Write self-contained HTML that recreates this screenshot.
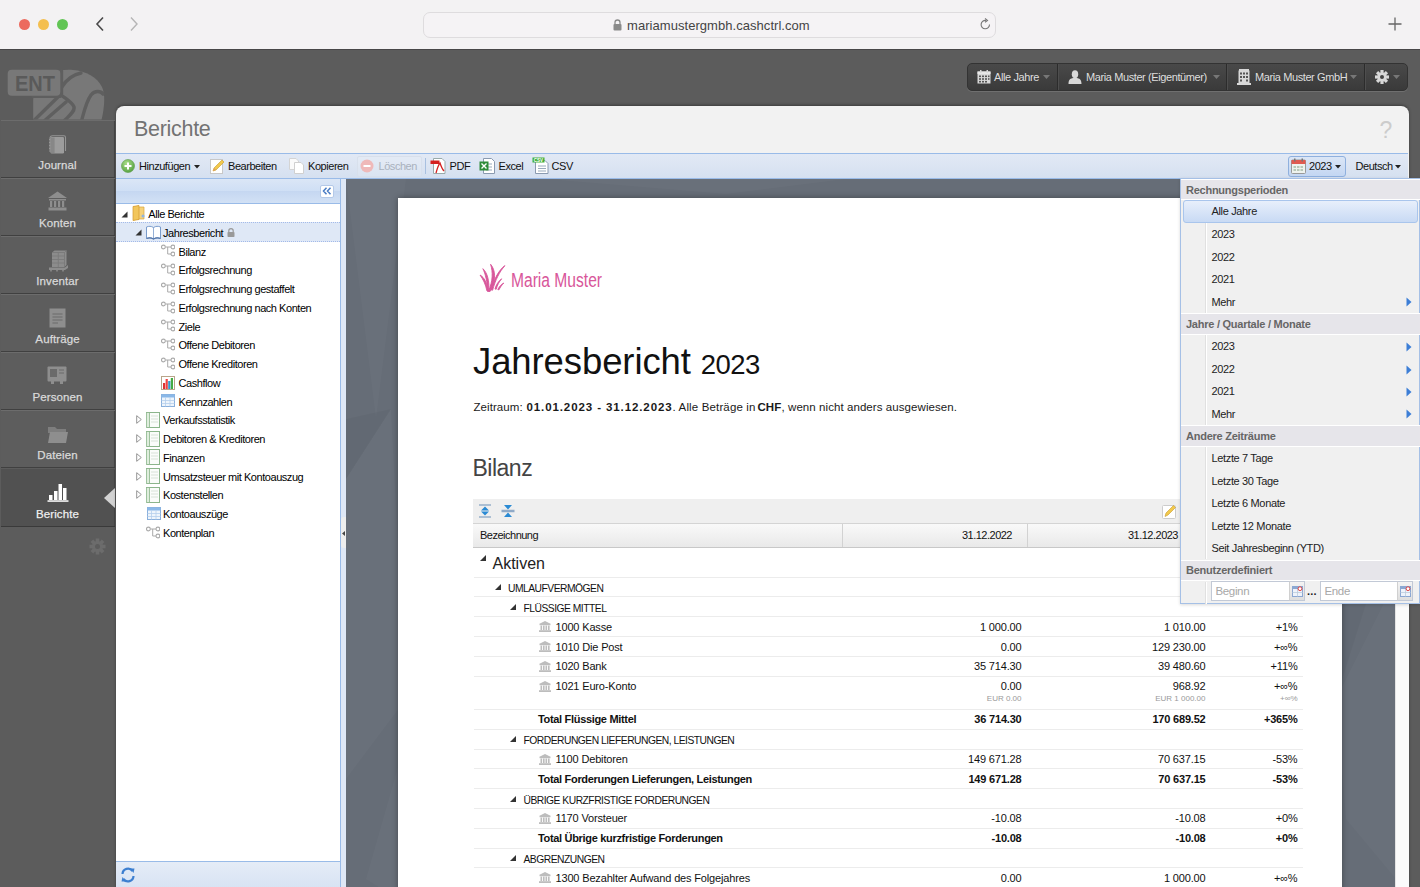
<!DOCTYPE html>
<html><head><meta charset="utf-8">
<style>
*{box-sizing:border-box}
html,body{margin:0;padding:0}
body{width:1420px;height:887px;overflow:hidden;position:relative;background:#5c5c5c;font-family:"Liberation Sans",sans-serif;font-size:11px;color:#000}
.abs{position:absolute}
#chrome{left:0;top:0;width:1420px;height:50px;background:#f3f2f3;border-bottom:1px solid #474747}
.tl{position:absolute;top:18.5px;width:11.5px;height:11.5px;border-radius:50%}
#url{left:423px;top:11.5px;width:573px;height:26px;border:1px solid #dedcde;border-radius:7px;background:#f5f3f5}
#urltext{left:627px;top:17.5px;font-size:13px;color:#444;letter-spacing:0.05px}
/* top buttons */
#topbtns{left:967px;top:63px;width:441px;height:28px;border-radius:5px;background:linear-gradient(#494949,#3a3a3a);border:1px solid #333;box-shadow:0 1px 0 rgba(255,255,255,.12)}
.tb{position:absolute;top:0;height:26px;line-height:27px;color:#dedede;font-size:11px;letter-spacing:-0.4px;white-space:nowrap}
.tbsep{position:absolute;top:0;width:2px;height:26px;background:#2c2c2c;border-right:1px solid #4e4e4e}
/* nav */
.nav{position:absolute;left:1px;width:113.5px;height:58px;background:#5d5d5d;box-shadow:inset -1px 0 0 #474747;border-top:1px solid #6c6c6c;border-bottom:1px solid #404040;color:#d4d4d4;text-align:center;font-size:11.5px}
.nav.sel{background:#515151;border-top:1px solid #515151;border-bottom:1px solid #3a3a3a}
.nav .lbl{position:absolute;left:0;width:113px;top:38px;letter-spacing:.1px;-webkit-text-stroke:0.25px #d8d8d8;color:#dadada}
/* window */
#win{left:115.5px;top:106px;width:1293px;height:800px;background:#f2f2f2;border-radius:8px 8px 0 0;overflow:hidden;box-shadow:0 -1px 3px rgba(0,0,0,.35)}
#wtitle{left:134px;top:117px;font-size:21.5px;color:#737373;letter-spacing:-0.3px}
#toolbar{left:116px;top:153px;width:1292px;height:26px;background:linear-gradient(#e2e9f5,#d5e0f0);border-top:1px solid #99bbe8;border-bottom:1px solid #99bbe8}
.tbi{position:absolute;top:158px;height:16px;line-height:17px;font-size:11px;color:#111;letter-spacing:-0.45px;white-space:nowrap}
/* tree */
#treehdr{left:116px;top:179px;width:225px;height:25px;background:linear-gradient(#dbe6f6 0,#cfdff5 50%,#c5d7f1 51%,#d2e1f5 100%);border-bottom:1px solid #99bbe8;border-right:1px solid #99bbe8}
#tree{left:116px;top:204px;width:225px;height:657px;background:#fff;border-right:1px solid #99bbe8}
#treefoot{left:116px;top:861px;width:225px;height:30px;background:linear-gradient(#e5ecf7,#d6e2f3);border-top:1px solid #99bbe8;border-right:1px solid #99bbe8}
#splitter{left:341px;top:179px;width:5px;height:720px;background:#dfe8f6}
#rep{left:345.5px;top:179px;width:1050px;height:720px;background:#666d77}
#scrolltrack{left:1394.5px;top:179px;width:14.5px;height:720px;background:#fbfbfb;border-left:1px solid #e4e4e4}
#page{left:398px;top:198px;width:944px;height:720px;background:#fff;box-shadow:0 0 6px rgba(0,0,0,.35)}
.tt{height:18.76px;line-height:20.2px;font-size:11px;white-space:nowrap;letter-spacing:-0.45px}
.th{height:24px;line-height:24px;font-size:11px;white-space:nowrap;letter-spacing:-0.5px;color:#111}
.td{height:19.8px;line-height:20.8px;font-size:11px;white-space:nowrap;letter-spacing:-0.16px;color:#111}
.sub{height:10px;line-height:10px;font-size:8px;color:#999;white-space:nowrap}
.dh{height:22.4px;line-height:23px;font-size:11px;font-weight:bold;color:#666;white-space:nowrap;letter-spacing:-0.25px}
.di{height:22.4px;line-height:23px;font-size:11px;color:#222;white-space:nowrap;letter-spacing:-0.35px}
.zr{top:401px;font-size:11.5px;color:#1a1a1a;white-space:nowrap;letter-spacing:0.07px}
.tr{position:absolute;left:116px;width:225px;height:18.8px;line-height:18.8px;font-size:11px;white-space:nowrap}
</style></head><body>

<!-- browser chrome -->
<div id="chrome" class="abs">
  <div class="tl" style="left:18.5px;background:#ec6a5e;"></div>
  <div class="tl" style="left:37.5px;background:#f4bf4f;"></div>
  <div class="tl" style="left:56.5px;background:#61c554;"></div>
  <svg class="abs" style="left:94px;top:16px" width="12" height="16" viewBox="0 0 12 16"><path d="M9 1.5 L3 8 L9 14.5" fill="none" stroke="#4a4a4a" stroke-width="1.6"/></svg>
  <svg class="abs" style="left:128px;top:16px" width="12" height="16" viewBox="0 0 12 16"><path d="M3 1.5 L9 8 L3 14.5" fill="none" stroke="#b5b5b5" stroke-width="1.4"/></svg>
  <div id="url" class="abs"></div>
  <svg class="abs" style="left:613px;top:19px" width="9" height="12" viewBox="0 0 9 12"><path d="M2 5.5 V3.5 A2.5 2.5 0 0 1 7 3.5 V5.5" fill="none" stroke="#8a8a8a" stroke-width="1.3"/><rect x="0.5" y="5" width="8" height="6.5" rx="1" fill="#8a8a8a"/></svg>
  <div id="urltext" class="abs">mariamustergmbh.cashctrl.com</div>
  <svg class="abs" style="left:979px;top:18px" width="13" height="13" viewBox="0 0 13 13"><path d="M10.5 6.5 A4.2 4.2 0 1 1 7 2.4" fill="none" stroke="#777" stroke-width="1.1"/><path d="M6 0.5 L8.5 2.4 L6 4.3" fill="none" stroke="#777" stroke-width="1.1"/></svg>
  <svg class="abs" style="left:1388px;top:17px" width="14" height="14" viewBox="0 0 14 14"><path d="M7 0.5 V13.5 M0.5 7 H13.5" stroke="#666" stroke-width="1.3"/></svg>
</div>


<!-- logo -->
<svg class="abs" style="left:0px;top:60px" width="115" height="60" viewBox="0 0 115 60">
  <defs><clipPath id="lc"><rect x="0" y="0" width="115" height="59.5"/></clipPath></defs>
  <g clip-path="url(#lc)">
  <path d="M33.2 62 V40 C33.2 30 40 20 50 14 C58 10 66 9.5 73 10 C86 11 97 17 102 27 C106 36 104 50 101 62 Z" fill="#787878"/>
  <g stroke="#5f5f5f" stroke-width="3.4" fill="none" stroke-linecap="round">
   <path d="M61.5 11 V34"/>
   <path d="M62 27 C66 20 72 15 81 13"/>
   <path d="M60 35 L34.5 60"/>
   <path d="M33 36.4 H60"/>
   <path d="M61 35 C66 39 72 42 74 47 C75 51 70 55 65 60"/>
   <path d="M45.3 60 L66 42"/>
   <path d="M81.5 61 C84 52 86 42 91 35 C95 30 101 31 103 34"/>
  </g>
  </g>
  <rect x="7.7" y="9.7" width="52.6" height="26" rx="4" fill="#787878"/>
  <text x="35" y="31.3" text-anchor="middle" font-family="Liberation Sans" font-weight="bold" font-size="22" fill="#5a5a5a" textLength="40" lengthAdjust="spacingAndGlyphs">ENT</text>
</svg>

<!-- nav -->
<div class="nav" style="top:120px"><svg class="abs" style="left:48px;top:13.5px" width="18" height="19" viewBox="0 0 18 19"><path d="M1 17 V3 C1 1.5 2 0.7 3.5 0.7 H15 C16 0.7 16.5 1.5 16.5 2.5 V16" fill="none" stroke="#959595" stroke-width="1.1"/><rect x="1.5" y="2" width="13.5" height="16.5" rx="1.2" fill="#9c9c9c"/><rect x="2" y="2.5" width="3.6" height="15.5" fill="#878787"/><g fill="#959595"><rect x="0" y="4" width="1.5" height="1"/><rect x="0" y="7" width="1.5" height="1"/><rect x="0" y="10" width="1.5" height="1"/><rect x="0" y="13" width="1.5" height="1"/></g></svg><div class="lbl">Journal</div></div>
<div class="nav" style="top:178px"><svg class="abs" style="left:46px;top:12px" width="21" height="20" viewBox="0 0 21 20"><path d="M10.5 0.5 L20 7 H1 Z" fill="#8e8e8e"/><rect x="2" y="8" width="17" height="1.5" fill="#8e8e8e"/><rect x="3" y="10" width="2.2" height="6" fill="#8e8e8e"/><rect x="7" y="10" width="2.2" height="6" fill="#8e8e8e"/><rect x="11" y="10" width="2.2" height="6" fill="#8e8e8e"/><rect x="15" y="10" width="2.2" height="6" fill="#8e8e8e"/><rect x="1.5" y="16.5" width="18" height="3" fill="#8e8e8e"/></svg><div class="lbl">Konten</div></div>
<div class="nav" style="top:236px"><svg class="abs" style="left:46.5px;top:12.5px" width="21" height="22" viewBox="0 0 21 22"><path d="M4 2.5 L6.5 0.5 H18.5 V15 L16.5 17 H4 Z" fill="#8c8c8c"/><path d="M4 2.5 H16.5 V17 M16.5 2.5 L18.5 0.5" stroke="#777" stroke-width="0.8" fill="none"/><g stroke="#7a7a7a" stroke-width="0.9"><path d="M4 6 H16.5 M4 9.5 H16.5 M4 13 H16.5"/><path d="M10.3 2.5 V17"/></g><path d="M1 17.5 H17 L20 15 V18 L17 20 H1 Z" fill="#8c8c8c"/><path d="M3 20 V21.5 M9 20 V21.5 M15 20 V21.5" stroke="#8c8c8c" stroke-width="1.6"/></svg><div class="lbl">Inventar</div></div>
<div class="nav" style="top:294px"><svg class="abs" style="left:48px;top:12px" width="17" height="21" viewBox="0 0 17 21"><rect x="0.5" y="1.5" width="16" height="19" fill="#8e8e8e"/><path d="M3.5 7 H13.5 M3.5 10 H13.5 M3.5 13 H13.5 M3.5 16 H9" stroke="#6a6a6a" stroke-width="1.2"/></svg><div class="lbl">Aufträge</div></div>
<div class="nav" style="top:352px"><svg class="abs" style="left:46px;top:13px" width="20" height="19" viewBox="0 0 20 19"><rect x="0.5" y="0.5" width="19" height="15" rx="1" fill="#8e8e8e"/><rect x="3" y="3" width="7" height="8" fill="#6a6a6a"/><path d="M12 4 H17 M12 7 H17" stroke="#6a6a6a" stroke-width="1"/><rect x="4" y="15" width="3" height="3" fill="#8e8e8e"/><rect x="13" y="15" width="3" height="3" fill="#8e8e8e"/></svg><div class="lbl">Personen</div></div>
<div class="nav" style="top:410px"><svg class="abs" style="left:46px;top:14px" width="22" height="19" viewBox="0 0 22 19"><path d="M1 2 H8 L10 4 H19 V8 H1 Z" fill="#7e7e7e"/><path d="M3 7 H21 L19 18 H1 Z" fill="#8e8e8e"/></svg><div class="lbl">Dateien</div></div>
<div class="nav sel" style="top:468.5px"><svg class="abs" style="left:45.5px;top:12.5px" width="22" height="20" viewBox="0 0 22 20"><rect x="2" y="13" width="3.5" height="5" fill="#fff"/><rect x="7" y="9" width="3.5" height="9" fill="#fff"/><rect x="11.5" y="2" width="3.5" height="16" fill="#fff"/><rect x="16" y="6" width="3.5" height="12" fill="#fff"/><rect x="0.5" y="18.3" width="21" height="1.5" fill="#fff"/></svg><div class="lbl" style="color:#fff">Berichte</div></div>
<svg class="abs" style="left:103.5px;top:488px" width="11" height="20" viewBox="0 0 11 20"><path d="M11 0 L0 10 L11 20 Z" fill="#d2d2d2"/></svg>
<svg class="abs" style="left:89px;top:538px" width="17" height="17" viewBox="-8.5 -8.5 17 17"><g fill="#6c6c6c"><circle r="5.5"/><rect x="-1.8" y="-8" width="3.6" height="16"/><rect x="-1.8" y="-8" width="3.6" height="16" transform="rotate(45)"/><rect x="-1.8" y="-8" width="3.6" height="16" transform="rotate(90)"/><rect x="-1.8" y="-8" width="3.6" height="16" transform="rotate(135)"/></g><circle r="2.5" fill="#5c5c5c"/></svg>

<!-- top buttons -->
<div id="topbtns" class="abs">
  <svg class="abs" style="left:9px;top:6px" width="14" height="14" viewBox="0 0 14 14"><rect x="0.5" y="1.5" width="13" height="12" fill="#d8d8d8"/><rect x="0.5" y="1.5" width="13" height="2.5" fill="#e8e8e8"/><g fill="#555"><rect x="2" y="5.5" width="2" height="1.6"/><rect x="5" y="5.5" width="2" height="1.6"/><rect x="8" y="5.5" width="2" height="1.6"/><rect x="11" y="5.5" width="1.5" height="1.6"/><rect x="2" y="8.2" width="2" height="1.6"/><rect x="5" y="8.2" width="2" height="1.6"/><rect x="8" y="8.2" width="2" height="1.6"/><rect x="11" y="8.2" width="1.5" height="1.6"/><rect x="2" y="10.9" width="2" height="1.6"/><rect x="5" y="10.9" width="2" height="1.6"/><rect x="8" y="10.9" width="2" height="1.6"/></g><rect x="3" y="0" width="1.5" height="3" fill="#d8d8d8"/><rect x="9.5" y="0" width="1.5" height="3" fill="#d8d8d8"/></svg>
  <div class="tb" style="left:26px">Alle Jahre</div>
  <svg class="abs caret" style="left:75px;top:11px" width="7" height="4" viewBox="0 0 7 4"><path d="M0 0 H7 L3.5 4 Z" fill="#777"/></svg>
  <div class="tbsep" style="left:89px"></div>
  <svg class="abs" style="left:100px;top:6px" width="14" height="14" viewBox="0 0 14 14"><ellipse cx="7" cy="4.2" rx="3.2" ry="4" fill="#d8d8d8"/><path d="M0.5 14 C0.5 9 3 8.5 5 8 H9 C11 8.5 13.5 9 13.5 14 Z" fill="#d8d8d8"/></svg>
  <div class="tb" style="left:118px">Maria Muster (Eigentümer)</div>
  <svg class="abs caret" style="left:245px;top:11px" width="7" height="4" viewBox="0 0 7 4"><path d="M0 0 H7 L3.5 4 Z" fill="#777"/></svg>
  <div class="tbsep" style="left:258px"></div>
  <svg class="abs" style="left:269px;top:5px" width="14" height="16" viewBox="0 0 14 16"><rect x="1.5" y="1.5" width="11" height="13" fill="#d8d8d8"/><rect x="0" y="14" width="14" height="2" fill="#d8d8d8"/><rect x="2" y="0" width="10" height="2" fill="#d8d8d8"/><g fill="#555"><rect x="3" y="3.5" width="2" height="2"/><rect x="6" y="3.5" width="2" height="2"/><rect x="9" y="3.5" width="2" height="2"/><rect x="3" y="7" width="2" height="2"/><rect x="6" y="7" width="2" height="2"/><rect x="9" y="7" width="2" height="2"/><rect x="3" y="10.5" width="2" height="2"/><rect x="9" y="10.5" width="2" height="2"/></g></svg>
  <div class="tb" style="left:287px">Maria Muster GmbH</div>
  <svg class="abs caret" style="left:382px;top:11px" width="7" height="4" viewBox="0 0 7 4"><path d="M0 0 H7 L3.5 4 Z" fill="#777"/></svg>
  <div class="tbsep" style="left:396px"></div>
  <svg class="abs" style="left:407px;top:6px" width="14" height="14" viewBox="-7 -7 14 14"><g fill="#d8d8d8"><circle r="4.6"/><rect x="-1.6" y="-7" width="3.2" height="14"/><rect x="-1.6" y="-7" width="3.2" height="14" transform="rotate(45)"/><rect x="-1.6" y="-7" width="3.2" height="14" transform="rotate(90)"/><rect x="-1.6" y="-7" width="3.2" height="14" transform="rotate(135)"/></g><circle r="2" fill="#444"/></svg>
  <svg class="abs caret" style="left:425px;top:11px" width="7" height="4" viewBox="0 0 7 4"><path d="M0 0 H7 L3.5 4 Z" fill="#777"/></svg>
</div>

<!-- main window -->
<div id="win" class="abs"></div>
<div id="wtitle" class="abs">Berichte</div>
<div class="abs" style="left:1379.5px;top:117px;font-size:23px;color:#cccccc;line-height:26px">?</div>
<div id="toolbar" class="abs"></div>

<!-- toolbar items -->
<svg class="abs" style="left:120.5px;top:159px" width="14" height="14" viewBox="0 0 14 14"><defs><radialGradient id="gg" cx="0.4" cy="0.3" r="0.8"><stop offset="0" stop-color="#a8dc8a"/><stop offset="1" stop-color="#4f9d39"/></radialGradient></defs><circle cx="7" cy="7" r="6.5" fill="url(#gg)" stroke="#5a9a45" stroke-width="0.6"/><path d="M7 3.5 V10.5 M3.5 7 H10.5" stroke="#fff" stroke-width="2"/></svg>
<div class="tbi" style="left:139px">Hinzufügen</div>
<svg class="abs" style="left:194px;top:165px" width="6" height="4" viewBox="0 0 6 4"><path d="M0 0 H6 L3 3.5 Z" fill="#222"/></svg>
<svg class="abs" style="left:210px;top:158px" width="15" height="16" viewBox="0 0 15 16"><rect x="0.5" y="1.5" width="12" height="14" fill="#fff" stroke="#c8c8c8"/><path d="M3 13 L4 10 L12 2 L14 4 L6 12 Z" fill="#f2c94c" stroke="#c79a2a" stroke-width="0.6"/><path d="M3 13 L4 10 L6 12 Z" fill="#e0a060"/></svg>
<div class="tbi" style="left:228px">Bearbeiten</div>
<svg class="abs" style="left:289px;top:158px" width="15" height="16" viewBox="0 0 15 16"><path d="M0.5 0.5 H7 L9.5 3 V11.5 H0.5 Z" fill="#fafafa" stroke="#d4d4d4"/><path d="M5.5 4.5 H12 L14.5 7 V15.5 H5.5 Z" fill="#fff" stroke="#d0d0d0"/></svg>
<div class="tbi" style="left:308px">Kopieren</div>
<div class="abs" style="left:357px;top:156px;width:65px;height:21px;border:1px solid #d8e0ec;border-radius:2px;background:rgba(255,255,255,.12)"></div>
<svg class="abs" style="left:360px;top:159px" width="14" height="14" viewBox="0 0 14 14"><circle cx="7" cy="7" r="6.5" fill="#efb9b9"/><rect x="3.5" y="6" width="7" height="2" fill="#fff"/></svg>
<div class="tbi" style="left:378.5px;color:#a9b1bd">Löschen</div>
<div class="abs" style="left:425px;top:158px;width:1px;height:16px;background:#a8c0e0"></div>
<svg class="abs" style="left:430px;top:158px" width="16" height="16" viewBox="0 0 16 16"><path d="M3.5 0.5 H12 L15 3.5 V15.5 H3.5 Z" fill="#fff" stroke="#9aa"/><rect x="0.5" y="2.5" width="9" height="3.5" fill="#d42020"/><path d="M6 15 C8 8 9 6 10 5 C11 8 12 11 14 13" stroke="#d42020" stroke-width="1.3" fill="none"/></svg>
<div class="tbi" style="left:449.5px">PDF</div>
<svg class="abs" style="left:479px;top:158px" width="16" height="16" viewBox="0 0 16 16"><path d="M4.5 0.5 H12.5 L15.5 3.5 V15.5 H4.5 Z" fill="#fff" stroke="#8a9ab0"/><path d="M7 6 H13 M7 9 H13 M7 12 H13" stroke="#9ab" stroke-width="1"/><rect x="0.5" y="3.5" width="9" height="9" fill="#2e8b3a"/><path d="M2.5 5.5 L7.5 10.5 M7.5 5.5 L2.5 10.5" stroke="#fff" stroke-width="1.4"/></svg>
<div class="tbi" style="left:498.5px">Excel</div>
<svg class="abs" style="left:532px;top:157px" width="17" height="17" viewBox="0 0 17 17"><path d="M3.5 3.5 H13 L16 6.5 V16.5 H3.5 Z" fill="#fff" stroke="#8a9ab0"/><path d="M6 9 H14 M6 11.5 H14 M6 14 H14" stroke="#9ab" stroke-width="1"/><rect x="0.5" y="0.5" width="12" height="5" fill="#3fae3a"/><text x="6.5" y="4.7" font-size="4.5" text-anchor="middle" fill="#fff" font-family="Liberation Sans" font-weight="bold">CSV</text></svg>
<div class="tbi" style="left:551.5px">CSV</div>

<!-- year button / deutsch -->
<div class="abs" style="left:1288px;top:156px;width:58px;height:21px;border:1px solid #8fb0de;border-radius:3px;background:linear-gradient(#dbe6f6,#c3d6f2)"></div>
<svg class="abs" style="left:1291px;top:158px" width="15" height="16" viewBox="0 0 15 16"><rect x="0.5" y="2" width="14" height="13.5" rx="1" fill="#eef2ee" stroke="#999"/><rect x="0.5" y="2" width="14" height="4" fill="#e05a50"/><g fill="#b8c8b8"><rect x="2.5" y="8" width="2.5" height="2"/><rect x="6" y="8" width="2.5" height="2"/><rect x="9.5" y="8" width="2.5" height="2"/><rect x="2.5" y="11" width="2.5" height="2"/><rect x="6" y="11" width="2.5" height="2"/><rect x="9.5" y="11" width="2.5" height="2"/></g><rect x="3" y="0.5" width="1.5" height="3" fill="#777"/><rect x="10.5" y="0.5" width="1.5" height="3" fill="#777"/></svg>
<div class="tbi" style="left:1309px">2023</div>
<svg class="abs" style="left:1335px;top:165px" width="6" height="4" viewBox="0 0 6 4"><path d="M0 0 H6 L3 3.5 Z" fill="#222"/></svg>
<div class="tbi" style="left:1355.5px">Deutsch</div>
<svg class="abs" style="left:1395px;top:165px" width="6" height="4" viewBox="0 0 6 4"><path d="M0 0 H6 L3 3.5 Z" fill="#222"/></svg>

<div id="treehdr" class="abs"></div>
<div id="tree" class="abs"></div>
<div id="treefoot" class="abs"></div>
<!-- tree rows -->
<svg class="abs" style="left:120.5px;top:210.50px" width="7" height="7" viewBox="0 0 7 7"><path d="M6.5 0.5 V6.5 H0.5 Z" fill="#333"/></svg>
<div class="abs" style="left:132px;top:205.38px;line-height:0"><svg width="13" height="16" viewBox="0 0 13 16"><path d="M1 1.5 L7 0.5 V14.5 L1 15.5 Z" fill="#e8b64a"/><path d="M4 2 H12 V14 H4 Z" fill="#f6d27a" stroke="#d9a83c" stroke-width="0.7"/><path d="M1 1.5 L7 0.5 V14.5 L1 15.5 Z" fill="#f2c65c" stroke="#d29a30" stroke-width="0.7"/><circle cx="11" cy="11" r="1.5" fill="#8fb4e0"/></svg></div>
<div class="abs tt" style="left:148.3px;top:204.00px">Alle Berichte</div>
<div class="abs" style="left:116px;top:222.26px;width:224px;height:19.5px;background:#dfe8f6;border-top:1px dotted #a3bae9;border-bottom:1px dotted #a3bae9"></div>
<svg class="abs" style="left:135px;top:229.26px" width="7" height="7" viewBox="0 0 7 7"><path d="M6.5 0.5 V6.5 H0.5 Z" fill="#333"/></svg>
<div class="abs" style="left:145.5px;top:224.64px;line-height:0"><svg width="15" height="15" viewBox="0 0 15 15"><path d="M0.5 2 C3 1 5 1 7.5 2.5 C10 1 12 1 14.5 2 V13.5 C12 12.5 10 12.5 7.5 14 C5 12.5 3 12.5 0.5 13.5 Z" fill="#fff" stroke="#7a9ccc" stroke-width="1"/><path d="M7.5 2.5 V14" stroke="#7a9ccc" stroke-width="0.8"/><path d="M0.5 13.5 C3 12.5 5 12.5 7.5 14 C10 12.5 12 12.5 14.5 13.5" stroke="#5577aa" stroke-width="1.3" fill="none"/></svg></div>
<div class="abs tt" style="left:163px;top:222.76px">Jahresbericht</div>
<svg class="abs" style="left:227px;top:227.76px" width="8" height="9" viewBox="0 0 8 9"><path d="M1.8 4 V2.8 A2.2 2.2 0 0 1 6.2 2.8 V4" stroke="#999" stroke-width="1.2" fill="none"/><rect x="0.5" y="4" width="7" height="5" rx="0.8" fill="#999"/></svg>
<div class="abs" style="left:160.5px;top:244.40px;line-height:0"><svg width="14" height="13" viewBox="0 0 14 13"><path d="M4.3 3 H10 M6.7 3 V10 H10" stroke="#aaa" stroke-width="1" fill="none"/><circle cx="2.4" cy="3" r="1.9" fill="#fff" stroke="#aaa" stroke-width="1.1"/><circle cx="11.9" cy="3" r="1.9" fill="#fff" stroke="#aaa" stroke-width="1.1"/><circle cx="11.9" cy="10" r="1.9" fill="#fff" stroke="#aaa" stroke-width="1.1"/></svg></div>
<div class="abs tt" style="left:178.5px;top:241.52px">Bilanz</div>
<div class="abs" style="left:160.5px;top:263.16px;line-height:0"><svg width="14" height="13" viewBox="0 0 14 13"><path d="M4.3 3 H10 M6.7 3 V10 H10" stroke="#aaa" stroke-width="1" fill="none"/><circle cx="2.4" cy="3" r="1.9" fill="#fff" stroke="#aaa" stroke-width="1.1"/><circle cx="11.9" cy="3" r="1.9" fill="#fff" stroke="#aaa" stroke-width="1.1"/><circle cx="11.9" cy="10" r="1.9" fill="#fff" stroke="#aaa" stroke-width="1.1"/></svg></div>
<div class="abs tt" style="left:178.5px;top:260.28px">Erfolgsrechnung</div>
<div class="abs" style="left:160.5px;top:281.92px;line-height:0"><svg width="14" height="13" viewBox="0 0 14 13"><path d="M4.3 3 H10 M6.7 3 V10 H10" stroke="#aaa" stroke-width="1" fill="none"/><circle cx="2.4" cy="3" r="1.9" fill="#fff" stroke="#aaa" stroke-width="1.1"/><circle cx="11.9" cy="3" r="1.9" fill="#fff" stroke="#aaa" stroke-width="1.1"/><circle cx="11.9" cy="10" r="1.9" fill="#fff" stroke="#aaa" stroke-width="1.1"/></svg></div>
<div class="abs tt" style="left:178.5px;top:279.04px">Erfolgsrechnung gestaffelt</div>
<div class="abs" style="left:160.5px;top:300.68px;line-height:0"><svg width="14" height="13" viewBox="0 0 14 13"><path d="M4.3 3 H10 M6.7 3 V10 H10" stroke="#aaa" stroke-width="1" fill="none"/><circle cx="2.4" cy="3" r="1.9" fill="#fff" stroke="#aaa" stroke-width="1.1"/><circle cx="11.9" cy="3" r="1.9" fill="#fff" stroke="#aaa" stroke-width="1.1"/><circle cx="11.9" cy="10" r="1.9" fill="#fff" stroke="#aaa" stroke-width="1.1"/></svg></div>
<div class="abs tt" style="left:178.5px;top:297.80px">Erfolgsrechnung nach Konten</div>
<div class="abs" style="left:160.5px;top:319.44px;line-height:0"><svg width="14" height="13" viewBox="0 0 14 13"><path d="M4.3 3 H10 M6.7 3 V10 H10" stroke="#aaa" stroke-width="1" fill="none"/><circle cx="2.4" cy="3" r="1.9" fill="#fff" stroke="#aaa" stroke-width="1.1"/><circle cx="11.9" cy="3" r="1.9" fill="#fff" stroke="#aaa" stroke-width="1.1"/><circle cx="11.9" cy="10" r="1.9" fill="#fff" stroke="#aaa" stroke-width="1.1"/></svg></div>
<div class="abs tt" style="left:178.5px;top:316.56px">Ziele</div>
<div class="abs" style="left:160.5px;top:338.20px;line-height:0"><svg width="14" height="13" viewBox="0 0 14 13"><path d="M4.3 3 H10 M6.7 3 V10 H10" stroke="#aaa" stroke-width="1" fill="none"/><circle cx="2.4" cy="3" r="1.9" fill="#fff" stroke="#aaa" stroke-width="1.1"/><circle cx="11.9" cy="3" r="1.9" fill="#fff" stroke="#aaa" stroke-width="1.1"/><circle cx="11.9" cy="10" r="1.9" fill="#fff" stroke="#aaa" stroke-width="1.1"/></svg></div>
<div class="abs tt" style="left:178.5px;top:335.32px">Offene Debitoren</div>
<div class="abs" style="left:160.5px;top:356.96px;line-height:0"><svg width="14" height="13" viewBox="0 0 14 13"><path d="M4.3 3 H10 M6.7 3 V10 H10" stroke="#aaa" stroke-width="1" fill="none"/><circle cx="2.4" cy="3" r="1.9" fill="#fff" stroke="#aaa" stroke-width="1.1"/><circle cx="11.9" cy="3" r="1.9" fill="#fff" stroke="#aaa" stroke-width="1.1"/><circle cx="11.9" cy="10" r="1.9" fill="#fff" stroke="#aaa" stroke-width="1.1"/></svg></div>
<div class="abs tt" style="left:178.5px;top:354.08px">Offene Kreditoren</div>
<div class="abs" style="left:160.5px;top:375.72px;line-height:0"><svg width="14" height="14" viewBox="0 0 14 14"><rect x="0.5" y="0.5" width="13" height="13" fill="#fff" stroke="#b9a58a"/><rect x="2" y="7" width="2.2" height="6" fill="#d33"/><rect x="4.6" y="3" width="2.2" height="10" fill="#e44"/><rect x="7.2" y="5" width="2.2" height="8" fill="#39c"/><rect x="9.8" y="2" width="2.2" height="11" fill="#4a4"/></svg></div>
<div class="abs tt" style="left:178.5px;top:372.84px">Cashflow</div>
<div class="abs" style="left:160.5px;top:394.48px;line-height:0"><svg width="14" height="13" viewBox="0 0 14 13"><rect x="0.5" y="0.5" width="13" height="12" fill="#eef5fc" stroke="#8ab0dc"/><rect x="0.5" y="0.5" width="13" height="3" fill="#8ab8e8"/><path d="M0.5 6.5 H13.5 M0.5 9.5 H13.5 M4.5 3.5 V12.5 M9 3.5 V12.5" stroke="#b5cfec" stroke-width="0.8"/></svg></div>
<div class="abs tt" style="left:178.5px;top:391.60px">Kennzahlen</div>
<svg class="abs" style="left:136px;top:415.36px" width="6" height="9" viewBox="0 0 6 9"><path d="M0.7 0.7 L5.3 4.5 L0.7 8.3 Z" fill="#fff" stroke="#8a8a8a" stroke-width="0.9"/></svg>
<div class="abs" style="left:145.5px;top:411.74px;line-height:0"><svg width="14" height="16" viewBox="0 0 14 16"><rect x="1.5" y="0.5" width="12" height="15" fill="#fafcfa" stroke="#8bb58b"/><rect x="0.5" y="0.5" width="3" height="15" fill="#dfeedd" stroke="#8bb58b" stroke-width="0.8"/><path d="M5 4 H12 M5 7 H12 M5 10 H12" stroke="#cfdccf" stroke-width="0.8"/></svg></div>
<div class="abs tt" style="left:163px;top:410.36px">Verkaufsstatistik</div>
<svg class="abs" style="left:136px;top:434.12px" width="6" height="9" viewBox="0 0 6 9"><path d="M0.7 0.7 L5.3 4.5 L0.7 8.3 Z" fill="#fff" stroke="#8a8a8a" stroke-width="0.9"/></svg>
<div class="abs" style="left:145.5px;top:430.50px;line-height:0"><svg width="14" height="16" viewBox="0 0 14 16"><rect x="1.5" y="0.5" width="12" height="15" fill="#fafcfa" stroke="#8bb58b"/><rect x="0.5" y="0.5" width="3" height="15" fill="#dfeedd" stroke="#8bb58b" stroke-width="0.8"/><path d="M5 4 H12 M5 7 H12 M5 10 H12" stroke="#cfdccf" stroke-width="0.8"/></svg></div>
<div class="abs tt" style="left:163px;top:429.12px">Debitoren &amp; Kreditoren</div>
<svg class="abs" style="left:136px;top:452.88px" width="6" height="9" viewBox="0 0 6 9"><path d="M0.7 0.7 L5.3 4.5 L0.7 8.3 Z" fill="#fff" stroke="#8a8a8a" stroke-width="0.9"/></svg>
<div class="abs" style="left:145.5px;top:449.26px;line-height:0"><svg width="14" height="16" viewBox="0 0 14 16"><rect x="1.5" y="0.5" width="12" height="15" fill="#fafcfa" stroke="#8bb58b"/><rect x="0.5" y="0.5" width="3" height="15" fill="#dfeedd" stroke="#8bb58b" stroke-width="0.8"/><path d="M5 4 H12 M5 7 H12 M5 10 H12" stroke="#cfdccf" stroke-width="0.8"/></svg></div>
<div class="abs tt" style="left:163px;top:447.88px">Finanzen</div>
<svg class="abs" style="left:136px;top:471.64px" width="6" height="9" viewBox="0 0 6 9"><path d="M0.7 0.7 L5.3 4.5 L0.7 8.3 Z" fill="#fff" stroke="#8a8a8a" stroke-width="0.9"/></svg>
<div class="abs" style="left:145.5px;top:468.02px;line-height:0"><svg width="14" height="16" viewBox="0 0 14 16"><rect x="1.5" y="0.5" width="12" height="15" fill="#fafcfa" stroke="#8bb58b"/><rect x="0.5" y="0.5" width="3" height="15" fill="#dfeedd" stroke="#8bb58b" stroke-width="0.8"/><path d="M5 4 H12 M5 7 H12 M5 10 H12" stroke="#cfdccf" stroke-width="0.8"/></svg></div>
<div class="abs tt" style="left:163px;top:466.64px">Umsatzsteuer mit Kontoauszug</div>
<svg class="abs" style="left:136px;top:490.40px" width="6" height="9" viewBox="0 0 6 9"><path d="M0.7 0.7 L5.3 4.5 L0.7 8.3 Z" fill="#fff" stroke="#8a8a8a" stroke-width="0.9"/></svg>
<div class="abs" style="left:145.5px;top:486.78px;line-height:0"><svg width="14" height="16" viewBox="0 0 14 16"><rect x="1.5" y="0.5" width="12" height="15" fill="#fafcfa" stroke="#8bb58b"/><rect x="0.5" y="0.5" width="3" height="15" fill="#dfeedd" stroke="#8bb58b" stroke-width="0.8"/><path d="M5 4 H12 M5 7 H12 M5 10 H12" stroke="#cfdccf" stroke-width="0.8"/></svg></div>
<div class="abs tt" style="left:163px;top:485.40px">Kostenstellen</div>
<div class="abs" style="left:146.5px;top:507.04px;line-height:0"><svg width="14" height="13" viewBox="0 0 14 13"><rect x="0.5" y="0.5" width="13" height="12" fill="#eef5fc" stroke="#8ab0dc"/><rect x="0.5" y="0.5" width="13" height="3" fill="#8ab8e8"/><path d="M0.5 6.5 H13.5 M0.5 9.5 H13.5 M4.5 3.5 V12.5 M9 3.5 V12.5" stroke="#b5cfec" stroke-width="0.8"/></svg></div>
<div class="abs tt" style="left:163px;top:504.16px">Kontoauszüge</div>
<div class="abs" style="left:145.5px;top:525.80px;line-height:0"><svg width="14" height="13" viewBox="0 0 14 13"><path d="M4.3 3 H10 M6.7 3 V10 H10" stroke="#aaa" stroke-width="1" fill="none"/><circle cx="2.4" cy="3" r="1.9" fill="#fff" stroke="#aaa" stroke-width="1.1"/><circle cx="11.9" cy="3" r="1.9" fill="#fff" stroke="#aaa" stroke-width="1.1"/><circle cx="11.9" cy="10" r="1.9" fill="#fff" stroke="#aaa" stroke-width="1.1"/></svg></div>
<div class="abs tt" style="left:163px;top:522.92px">Kontenplan</div>
<div class="abs" style="left:320px;top:184.5px;width:14px;height:13px;border:1px solid #b4c9e8;border-radius:2px;background:#fff"></div>
<svg class="abs" style="left:322px;top:187px" width="10" height="8" viewBox="0 0 10 8"><path d="M4.5 0.8 L1.5 4 L4.5 7.2 M8.5 0.8 L5.5 4 L8.5 7.2" stroke="#4a7cc4" stroke-width="1.5" fill="none"/></svg>
<svg class="abs" style="left:120px;top:867px" width="16" height="16" viewBox="0 0 16 16"><path d="M2.5 7 A5.5 5.5 0 0 1 12.5 4" stroke="#3d7fd0" stroke-width="2.2" fill="none"/><path d="M10 1.5 L14.5 1.5 L13.5 6 Z" fill="#3d7fd0"/><path d="M13.5 9 A5.5 5.5 0 0 1 3.5 12" stroke="#3d7fd0" stroke-width="2.2" fill="none"/><path d="M6 14.5 L1.5 14.5 L2.5 10 Z" fill="#3d7fd0"/></svg>
<div id="splitter" class="abs"></div>
<div id="rep" class="abs"><svg width="1050" height="720" style="position:absolute;left:0;top:0"><g fill="#fff" fill-opacity="0.025"><path d="M0 0 L60 0 L30 240 Z"/><path d="M0 300 L45 230 L60 520 L0 600 Z"/><path d="M20 700 L60 560 L52 720 Z"/><path d="M980 120 L1050 60 L1050 330 Z"/><path d="M990 520 L1050 400 L1050 700 L1000 640 Z"/><path d="M200 0 L500 0 L380 15 Z"/></g><g fill="#000" fill-opacity="0.03"><path d="M0 240 L45 230 L0 300 Z"/><path d="M1000 330 L1050 330 L990 520 Z"/></g></svg></div>
<div class="abs" style="left:341px;top:517px;width:5px;height:31px;background:#eeeeee;border-radius:3px 0 0 3px"></div>
<svg class="abs" style="left:342px;top:530.5px" width="3" height="5" viewBox="0 0 3 5"><path d="M3 0 V5 L0 2.5 Z" fill="#444"/></svg>
<div id="scrolltrack" class="abs"></div>
<div id="page" class="abs"></div>

<!-- page content -->
<svg class="abs" style="left:479px;top:263px" width="28" height="30" viewBox="-1 -1 28 30">
 <g fill="#d8579b" stroke="#d8579b" stroke-width="0.9" stroke-linejoin="round">
  <path d="M10.6 0.3 C15.5 6 16.5 16 10 27.6 L8.4 27.2 C13 17 13 8 10.6 0.3 Z"/>
  <path d="M2.9 4.7 C7.5 9 9.5 17 8.8 27.4 L7.6 27.3 C7.3 18 5.5 10 2.9 4.7 Z"/>
  <path d="M0 11 C4.5 13.5 7 19 8 27 L7 27 C5.5 20 3 15 0 11 Z"/>
  <path d="M24.9 1.6 C19 6 14.5 14 11.2 26 L12.6 26.2 C15.5 15.5 19.5 8 24.9 1.6 Z"/>
  <path d="M21.7 14.8 C18.5 17 16 21 15 25 L16.2 25.2 C17.3 21 19.2 17.5 21.7 14.8 Z"/>
  <path d="M23.8 19 C21 20.5 19 23 17.8 25.6 L19 25.8 C20 23.5 21.8 21 23.8 19 Z"/>
 </g>
</svg>
<div class="abs" style="left:511px;top:269px;font-size:20px;color:#d8569a;transform:scaleX(0.78);transform-origin:0 0;white-space:nowrap;letter-spacing:0px">Maria Muster</div>
<div class="abs" style="left:473px;top:340.5px;font-size:36.5px;color:#111;white-space:nowrap;letter-spacing:-0.1px">Jahresbericht <span style="font-size:27.5px;letter-spacing:-0.6px">2023</span></div>
<div class="abs zr" style="left:473.5px">Zeitraum:</div>
<div class="abs zr" style="left:526.5px;font-weight:bold;letter-spacing:0.9px">01.01.2023 - 31.12.2023</div>
<div class="abs zr" style="left:672.5px;letter-spacing:0.15px">. Alle Beträge in</div>
<div class="abs zr" style="left:757.5px;font-weight:bold">CHF</div>
<div class="abs zr" style="left:781.5px;letter-spacing:0.07px">, wenn nicht anders ausgewiesen.</div>
<div class="abs" style="left:472.5px;top:454.5px;font-size:23px;color:#444;white-space:nowrap;letter-spacing:-0.5px">Bilanz</div>
<!-- table toolbar -->
<div class="abs" style="left:473px;top:499px;width:830px;height:24px;background:#efefef"></div>
<svg class="abs" style="left:478px;top:504px" width="14" height="14" viewBox="0 0 14 14"><path d="M1 1 H13 M1 13 H13" stroke="#6a8fb8" stroke-width="1.2"/><path d="M7 2.5 L11 6.5 H3 Z M7 11.5 L11 7.5 H3 Z" fill="#2a8ad4"/></svg>
<svg class="abs" style="left:501px;top:504px" width="14" height="14" viewBox="0 0 14 14"><path d="M0.5 6.3 H13.5 M0.5 7.7 H13.5" stroke="#6a8fb8" stroke-width="0.9"/><path d="M7 5.5 L11 1 H3 Z M7 8.5 L11 13 H3 Z" fill="#2a8ad4"/></svg>
<svg class="abs" style="left:1162px;top:504px" width="15" height="15" viewBox="0 0 15 15"><rect x="0.5" y="1.5" width="13" height="13" rx="1" fill="#fff" stroke="#ccc"/><path d="M3 12.5 L4 9 L11.5 1.5 L13.5 3.5 L6 11 Z" fill="#f2c94c" stroke="#c79a2a" stroke-width="0.6"/></svg>
<!-- header row -->
<div class="abs" style="left:473px;top:523px;width:830px;height:25px;background:linear-gradient(#f9f9f9,#e9e9e9);border-top:1px solid #d4d4d4;border-bottom:1px solid #c8c8c8"></div>
<div class="abs" style="left:842px;top:524px;width:1px;height:23px;background:#d2d2d2"></div>
<div class="abs" style="left:1027px;top:524px;width:1px;height:23px;background:#d2d2d2"></div>
<div class="abs" style="left:1211px;top:524px;width:1px;height:23px;background:#d2d2d2"></div>
<div class="abs th" style="left:480px;top:523px">Bezeichnung</div>
<div class="abs th" style="left:843px;top:523px;width:169px;text-align:right">31.12.2022</div>
<div class="abs th" style="left:1028px;top:523px;width:150px;text-align:right">31.12.2023</div>
<!-- Aktiven -->
<svg class="abs" style="left:480px;top:555px" width="6" height="6" viewBox="0 0 6 6"><path d="M6 0 V6 H0 Z" fill="#333"/></svg>
<div class="abs" style="left:492.5px;top:554.5px;font-size:16px;color:#222;white-space:nowrap">Aktiven</div>

<div class="abs" style="left:474px;top:576.60px;width:829px;height:1px;background:#ececec"></div>
<div class="abs" style="left:495px;top:584.10px;line-height:0"><svg width="6" height="6" viewBox="0 0 6 6"><path d="M6 0 V6 H0 Z" fill="#333"/></svg></div>
<div class="abs td" style="left:508px;top:577.10px;font-size:10.3px;letter-spacing:-0.5px;line-height:24.4px">UMLAUFVERMÖGEN</div>
<div class="abs" style="left:474px;top:596.40px;width:829px;height:1px;background:#ececec"></div>
<div class="abs" style="left:510px;top:603.90px;line-height:0"><svg width="6" height="6" viewBox="0 0 6 6"><path d="M6 0 V6 H0 Z" fill="#333"/></svg></div>
<div class="abs td" style="left:523.5px;top:596.90px;font-size:10.3px;letter-spacing:-0.5px;line-height:24.4px">FLÜSSIGE MITTEL</div>
<div class="abs" style="left:474px;top:616.20px;width:829px;height:1px;background:#ececec"></div>
<div class="abs" style="left:539px;top:621.20px;line-height:0"><svg width="12" height="11" viewBox="0 0 12 11"><path d="M6 0 L12 3 H0 Z" fill="#bdbdbd"/><rect x="0.5" y="3" width="11" height="1.2" fill="#bdbdbd"/><rect x="1.5" y="4.5" width="1.6" height="4.5" fill="#bdbdbd"/><rect x="4" y="4.5" width="1.6" height="4.5" fill="#bdbdbd"/><rect x="6.5" y="4.5" width="1.6" height="4.5" fill="#bdbdbd"/><rect x="9" y="4.5" width="1.6" height="4.5" fill="#bdbdbd"/><rect x="0" y="9.2" width="12" height="1.8" fill="#bdbdbd"/></svg></div>
<div class="abs td" style="left:555.5px;top:616.70px">1000 Kasse</div>
<div class="abs td" style="left:843px;top:616.70px;width:178.5px;text-align:right">1 000.00</div>
<div class="abs td" style="left:1028px;top:616.70px;width:177.5px;text-align:right">1 010.00</div>
<div class="abs td" style="left:1212px;top:616.70px;width:85.5px;text-align:right">+1%</div>
<div class="abs" style="left:474px;top:636.00px;width:829px;height:1px;background:#ececec"></div>
<div class="abs" style="left:539px;top:641.00px;line-height:0"><svg width="12" height="11" viewBox="0 0 12 11"><path d="M6 0 L12 3 H0 Z" fill="#bdbdbd"/><rect x="0.5" y="3" width="11" height="1.2" fill="#bdbdbd"/><rect x="1.5" y="4.5" width="1.6" height="4.5" fill="#bdbdbd"/><rect x="4" y="4.5" width="1.6" height="4.5" fill="#bdbdbd"/><rect x="6.5" y="4.5" width="1.6" height="4.5" fill="#bdbdbd"/><rect x="9" y="4.5" width="1.6" height="4.5" fill="#bdbdbd"/><rect x="0" y="9.2" width="12" height="1.8" fill="#bdbdbd"/></svg></div>
<div class="abs td" style="left:555.5px;top:636.50px">1010 Die Post</div>
<div class="abs td" style="left:843px;top:636.50px;width:178.5px;text-align:right">0.00</div>
<div class="abs td" style="left:1028px;top:636.50px;width:177.5px;text-align:right">129 230.00</div>
<div class="abs td" style="left:1212px;top:636.50px;width:85.5px;text-align:right">+∞%</div>
<div class="abs" style="left:474px;top:655.80px;width:829px;height:1px;background:#ececec"></div>
<div class="abs" style="left:539px;top:660.80px;line-height:0"><svg width="12" height="11" viewBox="0 0 12 11"><path d="M6 0 L12 3 H0 Z" fill="#bdbdbd"/><rect x="0.5" y="3" width="11" height="1.2" fill="#bdbdbd"/><rect x="1.5" y="4.5" width="1.6" height="4.5" fill="#bdbdbd"/><rect x="4" y="4.5" width="1.6" height="4.5" fill="#bdbdbd"/><rect x="6.5" y="4.5" width="1.6" height="4.5" fill="#bdbdbd"/><rect x="9" y="4.5" width="1.6" height="4.5" fill="#bdbdbd"/><rect x="0" y="9.2" width="12" height="1.8" fill="#bdbdbd"/></svg></div>
<div class="abs td" style="left:555.5px;top:656.30px">1020 Bank</div>
<div class="abs td" style="left:843px;top:656.30px;width:178.5px;text-align:right">35 714.30</div>
<div class="abs td" style="left:1028px;top:656.30px;width:177.5px;text-align:right">39 480.60</div>
<div class="abs td" style="left:1212px;top:656.30px;width:85.5px;text-align:right">+11%</div>
<div class="abs" style="left:474px;top:675.60px;width:829px;height:1px;background:#ececec"></div>
<div class="abs" style="left:539px;top:680.60px;line-height:0"><svg width="12" height="11" viewBox="0 0 12 11"><path d="M6 0 L12 3 H0 Z" fill="#bdbdbd"/><rect x="0.5" y="3" width="11" height="1.2" fill="#bdbdbd"/><rect x="1.5" y="4.5" width="1.6" height="4.5" fill="#bdbdbd"/><rect x="4" y="4.5" width="1.6" height="4.5" fill="#bdbdbd"/><rect x="6.5" y="4.5" width="1.6" height="4.5" fill="#bdbdbd"/><rect x="9" y="4.5" width="1.6" height="4.5" fill="#bdbdbd"/><rect x="0" y="9.2" width="12" height="1.8" fill="#bdbdbd"/></svg></div>
<div class="abs td" style="left:555.5px;top:676.10px">1021 Euro-Konto</div>
<div class="abs td" style="left:843px;top:676.10px;width:178.5px;text-align:right">0.00</div>
<div class="abs td" style="left:1028px;top:676.10px;width:177.5px;text-align:right">968.92</div>
<div class="abs td" style="left:1212px;top:676.10px;width:85.5px;text-align:right">+∞%</div>
<div class="abs sub" style="left:843px;top:693.60px;width:178.5px;text-align:right">EUR 0.00</div>
<div class="abs sub" style="left:1028px;top:693.60px;width:177.5px;text-align:right">EUR 1 000.00</div>
<div class="abs sub" style="left:1212px;top:693.60px;width:85.5px;text-align:right">+∞%</div>
<div class="abs" style="left:474px;top:708.95px;width:829px;height:1px;background:#ececec"></div>
<div class="abs td" style="left:538px;top:709.45px;font-weight:bold;letter-spacing:-0.32px">Total Flüssige Mittel</div>
<div class="abs td" style="left:843px;top:709.45px;width:178.5px;text-align:right;font-weight:bold;letter-spacing:-0.2px">36 714.30</div>
<div class="abs td" style="left:1028px;top:709.45px;width:177.5px;text-align:right;font-weight:bold;letter-spacing:-0.2px">170 689.52</div>
<div class="abs td" style="left:1212px;top:709.45px;width:85.5px;text-align:right;font-weight:bold;letter-spacing:-0.2px">+365%</div>
<div class="abs" style="left:474px;top:728.75px;width:829px;height:1px;background:#ececec"></div>
<div class="abs" style="left:510px;top:736.25px;line-height:0"><svg width="6" height="6" viewBox="0 0 6 6"><path d="M6 0 V6 H0 Z" fill="#333"/></svg></div>
<div class="abs td" style="left:523.5px;top:729.25px;font-size:10.3px;letter-spacing:-0.5px;line-height:24.4px">FORDERUNGEN LIEFERUNGEN, LEISTUNGEN</div>
<div class="abs" style="left:474px;top:748.55px;width:829px;height:1px;background:#ececec"></div>
<div class="abs" style="left:539px;top:753.55px;line-height:0"><svg width="12" height="11" viewBox="0 0 12 11"><path d="M6 0 L12 3 H0 Z" fill="#bdbdbd"/><rect x="0.5" y="3" width="11" height="1.2" fill="#bdbdbd"/><rect x="1.5" y="4.5" width="1.6" height="4.5" fill="#bdbdbd"/><rect x="4" y="4.5" width="1.6" height="4.5" fill="#bdbdbd"/><rect x="6.5" y="4.5" width="1.6" height="4.5" fill="#bdbdbd"/><rect x="9" y="4.5" width="1.6" height="4.5" fill="#bdbdbd"/><rect x="0" y="9.2" width="12" height="1.8" fill="#bdbdbd"/></svg></div>
<div class="abs td" style="left:555.5px;top:749.05px">1100 Debitoren</div>
<div class="abs td" style="left:843px;top:749.05px;width:178.5px;text-align:right">149 671.28</div>
<div class="abs td" style="left:1028px;top:749.05px;width:177.5px;text-align:right">70 637.15</div>
<div class="abs td" style="left:1212px;top:749.05px;width:85.5px;text-align:right">-53%</div>
<div class="abs" style="left:474px;top:768.35px;width:829px;height:1px;background:#ececec"></div>
<div class="abs td" style="left:538px;top:768.85px;font-weight:bold;letter-spacing:-0.32px">Total Forderungen Lieferungen, Leistungen</div>
<div class="abs td" style="left:843px;top:768.85px;width:178.5px;text-align:right;font-weight:bold;letter-spacing:-0.2px">149 671.28</div>
<div class="abs td" style="left:1028px;top:768.85px;width:177.5px;text-align:right;font-weight:bold;letter-spacing:-0.2px">70 637.15</div>
<div class="abs td" style="left:1212px;top:768.85px;width:85.5px;text-align:right;font-weight:bold;letter-spacing:-0.2px">-53%</div>
<div class="abs" style="left:474px;top:788.15px;width:829px;height:1px;background:#ececec"></div>
<div class="abs" style="left:510px;top:795.65px;line-height:0"><svg width="6" height="6" viewBox="0 0 6 6"><path d="M6 0 V6 H0 Z" fill="#333"/></svg></div>
<div class="abs td" style="left:523.5px;top:788.65px;font-size:10.3px;letter-spacing:-0.5px;line-height:24.4px">ÜBRIGE KURZFRISTIGE FORDERUNGEN</div>
<div class="abs" style="left:474px;top:807.95px;width:829px;height:1px;background:#ececec"></div>
<div class="abs" style="left:539px;top:812.95px;line-height:0"><svg width="12" height="11" viewBox="0 0 12 11"><path d="M6 0 L12 3 H0 Z" fill="#bdbdbd"/><rect x="0.5" y="3" width="11" height="1.2" fill="#bdbdbd"/><rect x="1.5" y="4.5" width="1.6" height="4.5" fill="#bdbdbd"/><rect x="4" y="4.5" width="1.6" height="4.5" fill="#bdbdbd"/><rect x="6.5" y="4.5" width="1.6" height="4.5" fill="#bdbdbd"/><rect x="9" y="4.5" width="1.6" height="4.5" fill="#bdbdbd"/><rect x="0" y="9.2" width="12" height="1.8" fill="#bdbdbd"/></svg></div>
<div class="abs td" style="left:555.5px;top:808.45px">1170 Vorsteuer</div>
<div class="abs td" style="left:843px;top:808.45px;width:178.5px;text-align:right">-10.08</div>
<div class="abs td" style="left:1028px;top:808.45px;width:177.5px;text-align:right">-10.08</div>
<div class="abs td" style="left:1212px;top:808.45px;width:85.5px;text-align:right">+0%</div>
<div class="abs" style="left:474px;top:827.75px;width:829px;height:1px;background:#ececec"></div>
<div class="abs td" style="left:538px;top:828.25px;font-weight:bold;letter-spacing:-0.32px">Total Übrige kurzfristige Forderungen</div>
<div class="abs td" style="left:843px;top:828.25px;width:178.5px;text-align:right;font-weight:bold;letter-spacing:-0.2px">-10.08</div>
<div class="abs td" style="left:1028px;top:828.25px;width:177.5px;text-align:right;font-weight:bold;letter-spacing:-0.2px">-10.08</div>
<div class="abs td" style="left:1212px;top:828.25px;width:85.5px;text-align:right;font-weight:bold;letter-spacing:-0.2px">+0%</div>
<div class="abs" style="left:474px;top:847.55px;width:829px;height:1px;background:#ececec"></div>
<div class="abs" style="left:510px;top:855.05px;line-height:0"><svg width="6" height="6" viewBox="0 0 6 6"><path d="M6 0 V6 H0 Z" fill="#333"/></svg></div>
<div class="abs td" style="left:523.5px;top:848.05px;font-size:10.3px;letter-spacing:-0.5px;line-height:24.4px">ABGRENZUNGEN</div>
<div class="abs" style="left:474px;top:867.35px;width:829px;height:1px;background:#ececec"></div>
<div class="abs" style="left:539px;top:872.35px;line-height:0"><svg width="12" height="11" viewBox="0 0 12 11"><path d="M6 0 L12 3 H0 Z" fill="#bdbdbd"/><rect x="0.5" y="3" width="11" height="1.2" fill="#bdbdbd"/><rect x="1.5" y="4.5" width="1.6" height="4.5" fill="#bdbdbd"/><rect x="4" y="4.5" width="1.6" height="4.5" fill="#bdbdbd"/><rect x="6.5" y="4.5" width="1.6" height="4.5" fill="#bdbdbd"/><rect x="9" y="4.5" width="1.6" height="4.5" fill="#bdbdbd"/><rect x="0" y="9.2" width="12" height="1.8" fill="#bdbdbd"/></svg></div>
<div class="abs td" style="left:555.5px;top:867.85px">1300 Bezahlter Aufwand des Folgejahres</div>
<div class="abs td" style="left:843px;top:867.85px;width:178.5px;text-align:right">0.00</div>
<div class="abs td" style="left:1028px;top:867.85px;width:177.5px;text-align:right">1 000.00</div>
<div class="abs td" style="left:1212px;top:867.85px;width:85.5px;text-align:right">+∞%</div>
<div class="abs" style="left:474px;top:887.15px;width:829px;height:1px;background:#ececec"></div>

<!-- dropdown -->
<div class="abs" style="left:1180px;top:177.5px;width:240px;height:426.5px;background:#f0f0f0;border:1px solid #a5c0e6;box-shadow:0 1px 3px rgba(0,0,0,.15)"></div>
<div class="abs" style="left:1181px;top:179.00px;width:239px;height:21.40px;background:#e6e5ea;border-top:1px solid #fff;border-bottom:1px solid #fff"></div>
<div class="abs dh" style="left:1186px;top:178.50px">Rechnungsperioden</div>
<div class="abs" style="left:1182.5px;top:200.4px;width:235px;height:22.2px;border:1px solid #a9c5ec;border-radius:3px;background:linear-gradient(#e8effb,#c8daf4);z-index:2"></div>
<div class="abs di" style="left:1211.5px;top:200.4px;z-index:3">Alle Jahre</div>
<div class="abs di" style="left:1211.5px;top:223.30px">2023</div>
<div class="abs di" style="left:1211.5px;top:245.70px">2022</div>
<div class="abs di" style="left:1211.5px;top:268.10px">2021</div>
<div class="abs di" style="left:1211.5px;top:290.50px">Mehr</div>
<svg class="abs" style="left:1405.5px;top:297.30px" width="6" height="10" viewBox="0 0 6 10"><path d="M0.5 0.5 L5.5 5 L0.5 9.5 Z" fill="#3c7ed6"/></svg>
<div class="abs" style="left:1205px;top:200.90px;width:2px;height:112.00px;border-left:1px solid #e0e0e0;border-right:1px solid #fff"></div>
<div class="abs" style="left:1181px;top:313.40px;width:239px;height:21.40px;background:#e6e5ea;border-top:1px solid #fff;border-bottom:1px solid #fff"></div>
<div class="abs dh" style="left:1186px;top:312.90px">Jahre / Quartale / Monate</div>
<div class="abs di" style="left:1211.5px;top:335.30px">2023</div>
<svg class="abs" style="left:1405.5px;top:342.10px" width="6" height="10" viewBox="0 0 6 10"><path d="M0.5 0.5 L5.5 5 L0.5 9.5 Z" fill="#3c7ed6"/></svg>
<div class="abs di" style="left:1211.5px;top:357.70px">2022</div>
<svg class="abs" style="left:1405.5px;top:364.50px" width="6" height="10" viewBox="0 0 6 10"><path d="M0.5 0.5 L5.5 5 L0.5 9.5 Z" fill="#3c7ed6"/></svg>
<div class="abs di" style="left:1211.5px;top:380.10px">2021</div>
<svg class="abs" style="left:1405.5px;top:386.90px" width="6" height="10" viewBox="0 0 6 10"><path d="M0.5 0.5 L5.5 5 L0.5 9.5 Z" fill="#3c7ed6"/></svg>
<div class="abs di" style="left:1211.5px;top:402.50px">Mehr</div>
<svg class="abs" style="left:1405.5px;top:409.30px" width="6" height="10" viewBox="0 0 6 10"><path d="M0.5 0.5 L5.5 5 L0.5 9.5 Z" fill="#3c7ed6"/></svg>
<div class="abs" style="left:1205px;top:335.30px;width:2px;height:89.60px;border-left:1px solid #e0e0e0;border-right:1px solid #fff"></div>
<div class="abs" style="left:1181px;top:425.40px;width:239px;height:21.40px;background:#e6e5ea;border-top:1px solid #fff;border-bottom:1px solid #fff"></div>
<div class="abs dh" style="left:1186px;top:424.90px">Andere Zeiträume</div>
<div class="abs di" style="left:1211.5px;top:447.30px">Letzte 7 Tage</div>
<div class="abs di" style="left:1211.5px;top:469.70px">Letzte 30 Tage</div>
<div class="abs di" style="left:1211.5px;top:492.10px">Letzte 6 Monate</div>
<div class="abs di" style="left:1211.5px;top:514.50px">Letzte 12 Monate</div>
<div class="abs di" style="left:1211.5px;top:536.90px">Seit Jahresbeginn (YTD)</div>
<div class="abs" style="left:1205px;top:447.30px;width:2px;height:112.00px;border-left:1px solid #e0e0e0;border-right:1px solid #fff"></div>
<div class="abs" style="left:1181px;top:559.80px;width:239px;height:21.40px;background:#e6e5ea;border-top:1px solid #fff;border-bottom:1px solid #fff"></div>
<div class="abs dh" style="left:1186px;top:559.30px">Benutzerdefiniert</div>
<div class="abs" style="left:1205px;top:581.70px;width:2px;height:22.40px;border-left:1px solid #e0e0e0;border-right:1px solid #fff"></div>
<div class="abs" style="left:1210.5px;top:581.20px;width:94px;height:19.8px;border:1px solid #c2c9d6;background:#fff"></div>
<div class="abs" style="left:1288.5px;top:581.20px;width:16px;height:19.8px;border:1px solid #c2c9d6;border-left:1px solid #d0d0d0;background:linear-gradient(#f4f4f4,#dedede)"></div>
<svg class="abs" style="left:1291.5px;top:585.5px" width="11" height="11" viewBox="0 0 11 11"><rect x="0.5" y="0.5" width="10" height="10" fill="#eef3fb" stroke="#8ba7d2"/><rect x="0.5" y="0.5" width="10" height="2.5" fill="#8ba7d2"/><path d="M5.5 3 V10.5 M0.5 6.5 H10.5" stroke="#bcd" stroke-width="0.8"/><circle cx="8" cy="2.7" r="1.9" fill="#fff" stroke="#d33" stroke-width="0.9"/></svg>
<div class="abs di" style="left:1215.5px;top:580px;color:#a8a8a8;font-size:11.5px">Beginn</div>
<div class="abs" style="left:1319.5px;top:581.20px;width:93.5px;height:19.8px;border:1px solid #c2c9d6;background:#fff"></div>
<div class="abs" style="left:1397.0px;top:581.20px;width:16px;height:19.8px;border:1px solid #c2c9d6;border-left:1px solid #d0d0d0;background:linear-gradient(#f4f4f4,#dedede)"></div>
<svg class="abs" style="left:1400.0px;top:585.5px" width="11" height="11" viewBox="0 0 11 11"><rect x="0.5" y="0.5" width="10" height="10" fill="#eef3fb" stroke="#8ba7d2"/><rect x="0.5" y="0.5" width="10" height="2.5" fill="#8ba7d2"/><path d="M5.5 3 V10.5 M0.5 6.5 H10.5" stroke="#bcd" stroke-width="0.8"/><circle cx="8" cy="2.7" r="1.9" fill="#fff" stroke="#d33" stroke-width="0.9"/></svg>
<div class="abs di" style="left:1324.5px;top:580px;color:#a8a8a8;font-size:11.5px">Ende</div>
<div class="abs di" style="left:1307px;top:580px;font-weight:bold;letter-spacing:0.2px">...</div>
</body></html>
